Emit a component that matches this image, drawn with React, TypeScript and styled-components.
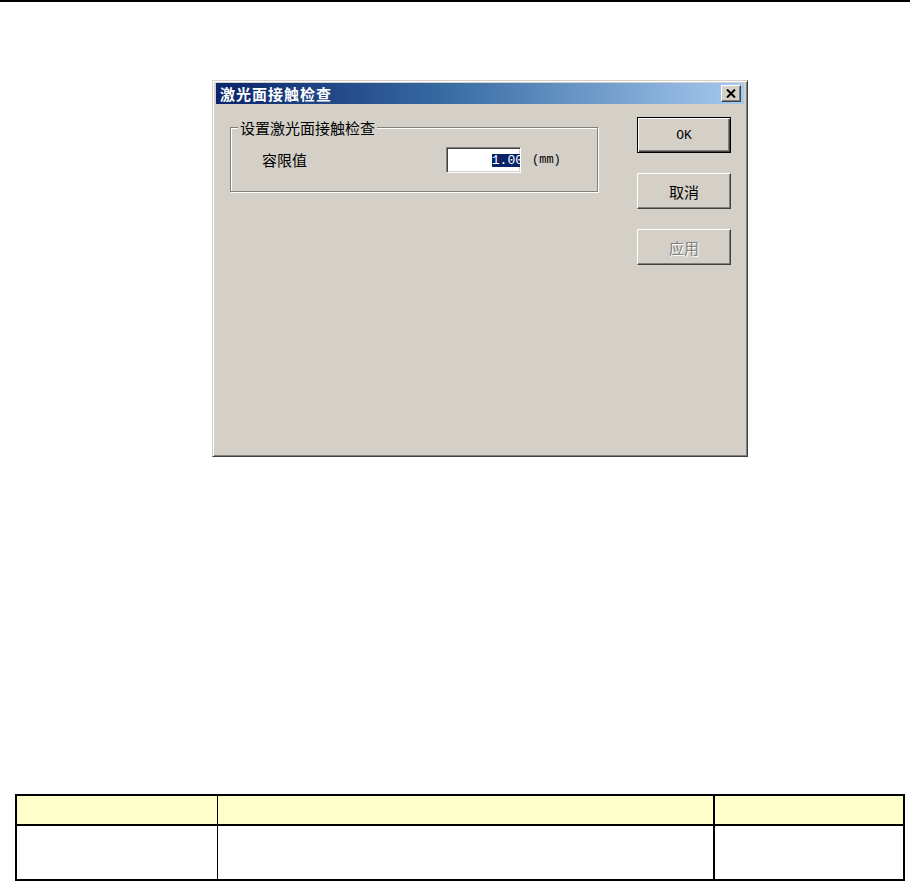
import React from "react";
import styled, { createGlobalStyle, css } from "styled-components";

const Global = createGlobalStyle`
  html, body { margin: 0; padding: 0; background: #ffffff; }
  body { font-family: "Noto Sans CJK SC", "Noto Sans", sans-serif; }
`;

const FACE = "#d4d0c8";

const Page = styled.div`
  width: 913px;
  min-height: 883px;
  display: flex;
  flex-direction: column;
  align-items: flex-start;
  background: #ffffff;
`;

const TopRule = styled.div`
  width: 910px;
  height: 2px;
  background: #000000;
  flex-shrink: 0;
`;

const Dialog = styled.div`
  margin: 78px 0 0 212px;
  width: 536px;
  height: 377px;
  box-sizing: border-box;
  background: ${FACE};
  border: 1px solid;
  border-color: ${FACE} #404040 #404040 ${FACE};
  box-shadow: inset 1px 1px #ffffff, inset -1px -1px #808080;
  padding: 2px 3px 3px 3px;
  display: flex;
  flex-direction: column;
  flex-shrink: 0;
`;

const TitleBar = styled.div`
  height: 21px;
  display: flex;
  align-items: center;
  justify-content: space-between;
  background: linear-gradient(to right, #0a246a 0%, #3a6ea5 45%, #a6caf0 100%);
  padding: 0 3px 0 4px;
`;

const TitleText = styled.span`
  color: #ffffff;
  font-family: "Noto Sans CJK SC", sans-serif;
  font-weight: 700;
  font-size: 15px;
  letter-spacing: 1px;
  line-height: 21px;
`;

const CloseButton = styled.div`
  width: 20px;
  height: 17px;
  box-sizing: border-box;
  background: ${FACE};
  border: 1px solid;
  border-color: #ffffff #404040 #404040 #ffffff;
  box-shadow: inset -1px -1px #808080;
  display: flex;
  align-items: center;
  justify-content: center;
`;

const Body = styled.div`
  flex: 1;
  display: flex;
  align-items: flex-start;
  padding: 13px 13px 0 14px;
`;

const GroupBox = styled.fieldset`
  margin: 2px 0 0 0;
  width: 368px;
  box-sizing: border-box;
  padding: 0 0 18px 0;
  border: 1px solid #808080;
  box-shadow: inset 1px 1px #ffffff, 1px 1px #ffffff;
  min-inline-size: 0;
`;

const GroupLegend = styled.legend`
  margin-left: 7px;
  padding: 0 2px;
  background: ${FACE};
  font-size: 15px;
  line-height: 17px;
  color: #000000;
`;

const FieldRow = styled.div`
  display: flex;
  align-items: center;
  margin-top: 11px;
  padding-left: 31px;
`;

const FieldLabel = styled.span`
  width: 184px;
  font-size: 15px;
  line-height: 20px;
  color: #000000;
`;

const TextField = styled.div`
  width: 75px;
  height: 26px;
  box-sizing: border-box;
  background: #ffffff;
  border: 1px solid;
  border-color: #808080 #ffffff #ffffff #808080;
  box-shadow: inset 1px 1px #404040, inset -1px -1px ${FACE};
  display: flex;
  align-items: center;
  justify-content: flex-end;
  overflow: hidden;
  padding-right: 2px;
`;

const Selected = styled.span`
  background: #0a246a;
  color: #ffffff;
  font-family: "Liberation Mono", monospace;
  font-size: 13px;
  line-height: 13px;
  margin-right: -5px;
  white-space: nowrap;
`;

const Unit = styled.span`
  margin-left: 11px;
  font-family: "Liberation Mono", monospace;
  font-size: 12px;
  color: #000000;
`;

const ButtonColumn = styled.div`
  margin-left: auto;
  display: flex;
  flex-direction: column;
  gap: 20px;
`;

const Button = styled.button<{ $default?: boolean; $latin?: boolean }>`
  width: 94px;
  height: 36px;
  box-sizing: border-box;
  margin: 0;
  padding: 0;
  background: ${FACE};
  color: #000000;
  font-family: ${(p) => (p.$latin ? `"Liberation Mono", monospace` : `"Noto Sans CJK SC", sans-serif`)};
  font-size: ${(p) => (p.$latin ? "13px" : "15px")};
  border: 1px solid;
  border-color: #ffffff #404040 #404040 #ffffff;
  box-shadow: inset -1px -1px #808080;
  cursor: default;
  ${(p) =>
    p.$default &&
    css`
      border-color: #000000;
      box-shadow: inset 1px 1px #ffffff, inset -1px -1px #404040, inset -2px -2px #808080;
    `}
  &:disabled {
    color: #808080;
    text-shadow: 1px 1px #ffffff;
  }
`;

const Table = styled.table`
  margin: 337px 0 0 15px;
  width: 887px;
  border-collapse: separate;
  border-spacing: 0;
  border: 2px solid #000000;
  table-layout: fixed;
  flex-shrink: 0;
`;

const HeadCell = styled.th<{ $w: number; $rule: number }>`
  width: ${(p) => p.$w}px;
  height: 28px;
  padding: 0;
  background: #ffffcc;
  border-bottom: 2px solid #000000;
  border-right: ${(p) => (p.$rule ? `${p.$rule}px solid #000000` : "none")};
`;

const BodyCell = styled.td<{ $rule: number }>`
  height: 53px;
  padding: 0;
  background: #ffffff;
  border-right: ${(p) => (p.$rule ? `${p.$rule}px solid #000000` : "none")};
`;

const columns = [
  { w: 200, rule: 1 },
  { w: 495, rule: 2 },
  { w: 188, rule: 0 },
];

export default function App() {
  return (
    <>
      <Global />
      <Page>
        <TopRule />
        <Dialog>
          <TitleBar>
            <TitleText>激光面接触检查</TitleText>
            <CloseButton>
              <svg width="10" height="9" viewBox="0 0 10 9">
                <path d="M1 0.5 L9 8.5 M9 0.5 L1 8.5" stroke="#000" strokeWidth="2" fill="none" />
              </svg>
            </CloseButton>
          </TitleBar>
          <Body>
            <GroupBox>
              <GroupLegend>设置激光面接触检查</GroupLegend>
              <FieldRow>
                <FieldLabel>容限值</FieldLabel>
                <TextField>
                  <Selected>1.00</Selected>
                </TextField>
                <Unit>(mm)</Unit>
              </FieldRow>
            </GroupBox>
            <ButtonColumn>
              <Button $default $latin>OK</Button>
              <Button>取消</Button>
              <Button disabled>应用</Button>
            </ButtonColumn>
          </Body>
        </Dialog>
        <Table>
          <thead>
            <tr>
              {columns.map((c, i) => (
                <HeadCell key={i} $w={c.w} $rule={c.rule} />
              ))}
            </tr>
          </thead>
          <tbody>
            <tr>
              {columns.map((c, i) => (
                <BodyCell key={i} $rule={c.rule} />
              ))}
            </tr>
          </tbody>
        </Table>
      </Page>
    </>
  );
}
